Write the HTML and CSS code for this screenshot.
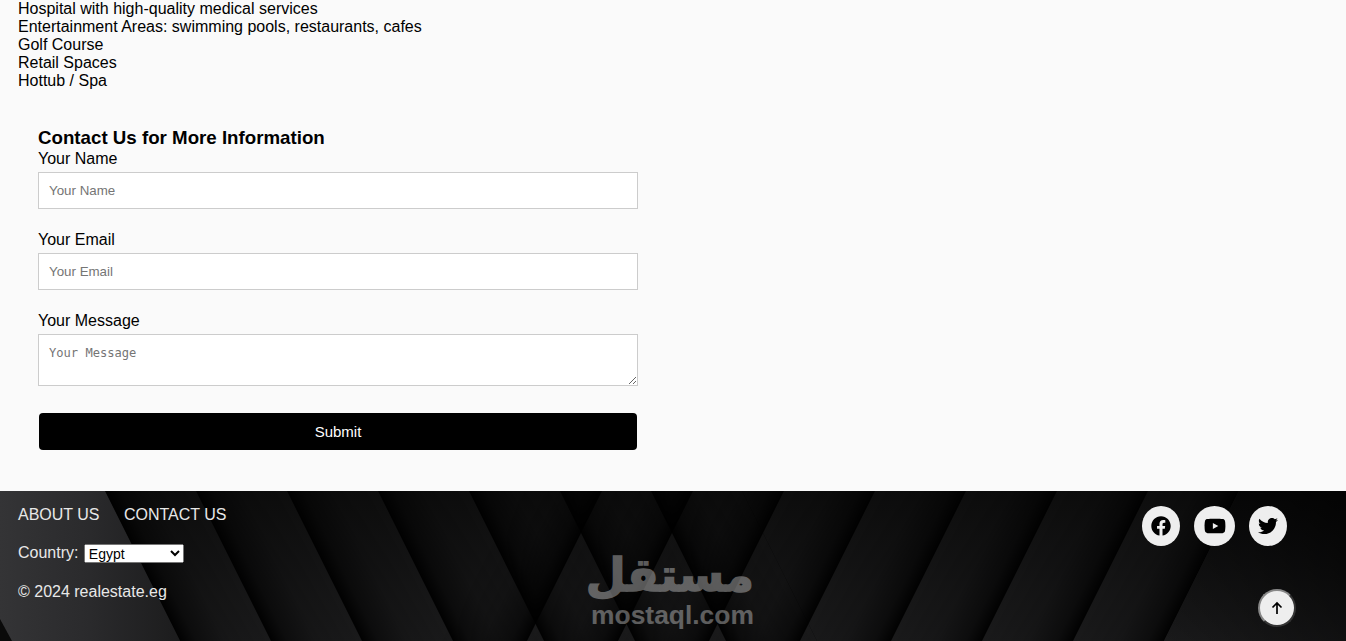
FILE: index.html
```html
<!DOCTYPE html>
<html>
<head>
  <title>Real Estate</title>
  <link rel="stylesheet" href="styles.css">
</head>
<body>
  <ul class="features">
    <li>Hospital with high-quality medical services</li>
    <li>Entertainment Areas: swimming pools, restaurants, cafes</li>
    <li>Golf Course</li>
    <li>Retail Spaces</li>
    <li>Hottub / Spa</li>
  </ul>

  <form class="contact-form">
    <h3>Contact Us for More Information</h3>
    <label for="name">Your Name</label>
    <input id="name" type="text" placeholder="Your Name">
    <label for="email">Your Email</label>
    <input id="email" type="email" placeholder="Your Email">
    <label for="message">Your Message</label>
    <textarea id="message" placeholder="Your Message"></textarea>
    <button class="submit" type="button">Submit</button>
  </form>

  <footer class="footer">
    <!-- footer background pattern -->
    <svg class="footer-bg" width="1346" height="150" viewBox="0 0 1346 150" aria-hidden="true">
      <defs>
        <linearGradient id="base" x1="0" y1="0" x2="0" y2="1">
          <stop offset="0" stop-color="#0d0d0d"/>
          <stop offset="1" stop-color="#1a1a1b"/>
        </linearGradient>
        <linearGradient id="wedge" x1="0" y1="0" x2="1" y2="0">
          <stop offset="0" stop-color="#343436"/>
          <stop offset="0.5" stop-color="#2a2a2c"/>
          <stop offset="1" stop-color="#1c1c1d"/>
        </linearGradient>
        <linearGradient id="rightFade" x1="0" y1="1" x2="1" y2="0">
          <stop offset="0" stop-color="#000" stop-opacity="0"/>
          <stop offset="1" stop-color="#000" stop-opacity="0.75"/>
        </linearGradient>
        <linearGradient id="shadeRight" x1="0" y1="0" x2="1" y2="0">
          <stop offset="0" stop-color="#000" stop-opacity="0.95"/>
          <stop offset="0.18" stop-color="#000" stop-opacity="0.5"/>
          <stop offset="0.5" stop-color="#000" stop-opacity="0.15"/>
          <stop offset="1" stop-color="#000" stop-opacity="0"/>
        </linearGradient>
        <linearGradient id="shadeLeft" x1="1" y1="0" x2="0" y2="0">
          <stop offset="0" stop-color="#000" stop-opacity="0.95"/>
          <stop offset="0.18" stop-color="#000" stop-opacity="0.5"/>
          <stop offset="0.5" stop-color="#000" stop-opacity="0.15"/>
          <stop offset="1" stop-color="#000" stop-opacity="0"/>
        </linearGradient>
        <pattern id="bandsRight" width="91" height="150" patternUnits="userSpaceOnUse" patternTransform="translate(14 0) skewX(26.57)">
          <rect width="91" height="150" fill="url(#shadeRight)"/>
        </pattern>
        <pattern id="bandsLeft" width="91" height="150" patternUnits="userSpaceOnUse" patternTransform="translate(56 0) skewX(-26.57)">
          <rect width="91" height="150" fill="url(#shadeLeft)"/>
        </pattern>
      </defs>
      <rect width="1346" height="150" fill="url(#base)"/>
      <polygon points="0,0 105,0 180,150 0,150" fill="url(#wedge)"/>
      <polygon points="0,128 12,150 0,150" fill="#0a0a0a"/>
      <polygon points="1239,0 1346,0 1346,150 1164,150" fill="url(#rightFade)"/>
      <polygon points="105,0 742,0 817,150 180,150" fill="url(#bandsRight)"/>
      <polygon points="516,0 1239,0 1164,150 441,150" fill="url(#bandsLeft)"/>
    </svg>

    <div class="footer-left">
      <nav class="footer-links">
        <a href="#">ABOUT US</a>
        <a href="#">CONTACT US</a>
      </nav>
      <div class="country">
        <label for="country">Country:</label>
        <select id="country">
          <option>Egypt</option>
        </select>
      </div>
      <p class="copyright">© 2024 realestate.eg</p>
    </div>

    <div class="socials">
      <a class="social" href="#">
        <svg width="20" height="20" viewBox="0 0 512 512"><path d="M504 256C504 119 393 8 256 8S8 119 8 256c0 123.78 90.69 226.38 209.25 245V327.69h-63V256h63v-54.64c0-62.15 37-96.48 93.67-96.48 27.14 0 55.52 4.84 55.52 4.84v61h-31.28c-30.8 0-40.41 19.12-40.41 38.73V256h68.78l-11 71.69h-57.78V501C413.31 482.38 504 379.78 504 256z"/></svg>
      </a>
      <a class="social social-wide" href="#">
        <svg width="22" height="20" viewBox="0 0 576 512"><path d="M549.655 124.083c-6.281-23.65-24.787-42.276-48.284-48.597C458.781 64 288 64 288 64S117.22 64 74.629 75.486c-23.497 6.322-42.003 24.947-48.284 48.597-11.412 42.867-11.412 132.305-11.412 132.305s0 89.438 11.412 132.305c6.281 23.65 24.787 41.5 48.284 47.821C117.22 448 288 448 288 448s170.78 0 213.371-11.486c23.497-6.321 42.003-24.171 48.284-47.821 11.412-42.867 11.412-132.305 11.412-132.305s0-89.438-11.412-132.305zm-317.51 213.508V175.185l142.739 81.205-142.739 81.201z"/></svg>
      </a>
      <a class="social" href="#">
        <svg width="20" height="20" viewBox="0 0 512 512"><path d="M459.37 151.716c.325 4.548.325 9.097.325 13.645 0 138.72-105.583 298.558-298.558 298.558-59.452 0-114.68-17.219-161.137-47.106 8.447.974 16.568 1.299 25.34 1.299 49.055 0 94.213-16.568 130.274-44.832-46.132-.975-84.792-31.188-98.112-72.772 6.498.974 12.995 1.624 19.818 1.624 9.421 0 18.843-1.3 27.614-3.573-48.081-9.747-84.143-51.98-84.143-102.985v-1.299c13.969 7.797 30.214 12.67 47.431 13.319-28.264-18.843-46.781-51.005-46.781-87.391 0-19.492 5.197-37.36 14.294-52.954 51.655 63.675 129.3 105.258 216.365 109.807-1.624-7.797-2.599-15.918-2.599-24.04 0-57.828 46.782-104.934 104.934-104.934 30.213 0 57.502 12.67 76.67 33.137 23.715-4.548 46.456-13.32 66.599-25.34-7.798 24.366-24.366 44.833-46.132 57.827 21.117-2.273 41.584-8.122 60.426-16.243-14.292 20.791-32.161 39.308-52.628 54.253z"/></svg>
      </a>
    </div>

    <button class="to-top" type="button" aria-label="Back to top">
      <svg width="12" height="14" viewBox="0 0 12 14"><path d="M6 13V2M1.5 6.5 6 2l4.5 4.5" fill="none" stroke="#000" stroke-width="1.7"/></svg>
    </button>

    <div class="watermark">
      <div class="watermark-ar" lang="ar" dir="rtl">مستقل</div>
      <div class="watermark-en">mostaql.com</div>
    </div>
  </footer>
</body>
</html>
```

FILE: styles.css
```css
/* Page */
html, body {
  height: 641px;
  overflow: hidden;
}

body {
  margin: 0;
  background-color: #fafafa;
  color: #000;
  font-family: "Liberation Sans", Arial, sans-serif;
  font-size: 16px;
  line-height: 18px;
}

/* Features list */
.features {
  list-style: none;
  margin: 0;
  padding: 0 18px;
}

/* Contact form */
.contact-form {
  width: 600px;
  margin: 37px 0 41px 38px;
  display: flex;
  flex-direction: column;
}

.contact-form h3 {
  margin: 0 0 1px;
  font-size: 18.72px;
  line-height: 21px;
}

.contact-form label {
  margin-bottom: 4px;
  padding-top: 1px;
}

.contact-form input,
.contact-form textarea {
  box-sizing: border-box;
  width: 600px;
  margin: 0 0 21px;
  padding: 10px;
  border: 1px solid #ccc;
  background-color: #fff;
  outline: none;
}

.contact-form input {
  height: 37px;
  font-family: "Liberation Sans", Arial, sans-serif;
  font-size: 13.33px;
}

.contact-form textarea {
  display: block;
  height: 52px;
  margin-bottom: 27px;
  font-family: "DejaVu Sans Mono", monospace;
  font-size: 12.1px;
  line-height: 17px;
}

.submit {
  height: 37px;
  margin: 0 1px;
  border: none;
  border-radius: 4px;
  background-color: #000;
  color: #fff;
  font-family: "Liberation Sans", Arial, sans-serif;
  font-size: 15px;
  cursor: pointer;
}

/* Footer */
.footer {
  position: relative;
  height: 150px;
  display: flex;
  justify-content: space-between;
  align-items: flex-start;
  padding: 15px 59px 0 18px;
  box-sizing: border-box;
  color: #e8e8e8;
  overflow: hidden;
}

.footer-bg {
  position: absolute;
  top: 0;
  left: 0;
}

.footer-left,
.socials {
  position: relative;
}

.footer-links {
  display: flex;
  gap: 24.4px;
}

.footer-links a {
  color: #e8e8e8;
  text-decoration: none;
}

.country {
  display: flex;
  align-items: center;
  gap: 5.4px;
  margin-top: 20px;
  height: 18px;
}

.country select {
  width: 100px;
  height: 19px;
  padding: 0;
  font-family: "Liberation Sans", Arial, sans-serif;
  font-size: 14px;
}

.copyright {
  margin: 21px 0 0;
}

.socials {
  display: flex;
  gap: 14px;
}

.social {
  display: flex;
  align-items: center;
  justify-content: center;
  width: 38px;
  height: 40px;
  border-radius: 50%;
  background-color: #eee;
}

.social-wide {
  width: 41px;
}

.to-top {
  position: absolute;
  left: 1258px;
  top: 98px;
  display: flex;
  align-items: center;
  justify-content: center;
  box-sizing: border-box;
  width: 38px;
  height: 38px;
  padding: 0;
  border: 2px outset #888;
  border-radius: 50%;
  background-color: #eee;
  cursor: pointer;
}

/* Watermark */
.watermark {
  position: absolute;
  left: 591px;
  top: 57px;
  width: 163px;
  color: #fff;
  opacity: 0.34;
  font-weight: bold;
  text-align: center;
}

.watermark-ar {
  height: 54px;
  font-family: "DejaVu Sans", sans-serif;
  font-size: 46px;
  line-height: 54px;
  -webkit-text-stroke: 1.5px #fff;
}

.watermark-en {
  font-family: "Liberation Sans", Arial, sans-serif;
  font-size: 26.4px;
  line-height: 26px;
}
```
